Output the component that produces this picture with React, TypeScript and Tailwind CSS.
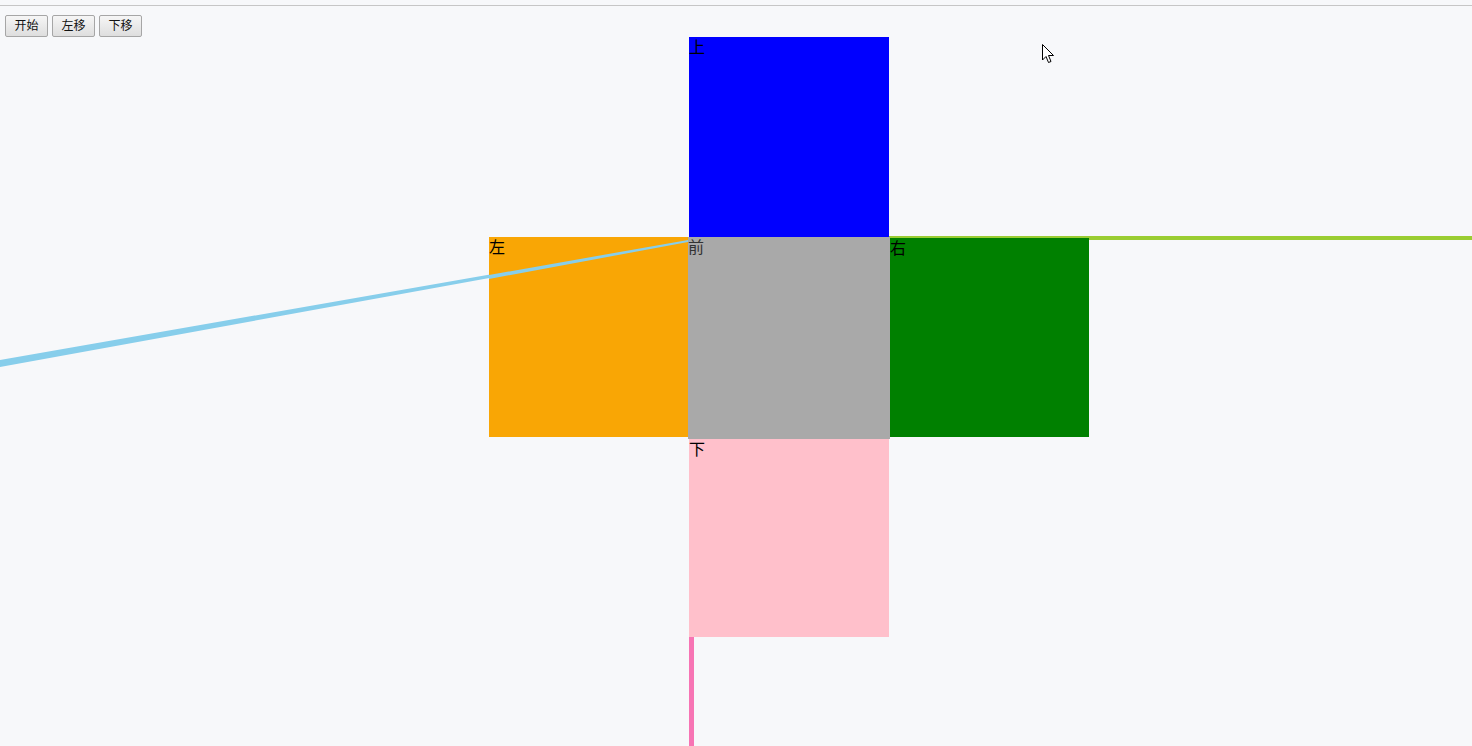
import React from "react";

const faces = [
  { label: "上", cls: "left-[689px] top-[37px] w-[200px] h-[200px] bg-[#0000ff]", text: "text-black" },
  { label: "左", cls: "left-[489px] top-[237px] w-[200px] h-[200px] bg-[#f9a605]", text: "text-black" },
  { label: "右", cls: "left-[890px] top-[237px] w-[199px] h-[200px] bg-[#008000] border-t border-[#9acd32]", text: "text-black" },
  { label: "下", cls: "left-[689px] top-[439px] w-[200px] h-[198px] bg-[#ffc0cb]", text: "text-black" },
  { label: "前", cls: "left-[688px] top-[237px] w-[202px] h-[202px] bg-[#a9a9a9]", text: "text-[#333333]" },
];

const buttons = ["开始", "左移", "下移"];

export default function App() {
  return (
    <div
      className="relative w-[1472px] h-[746px] overflow-hidden bg-[#f7f8fa]"
      style={{ fontFamily: '"Liberation Sans", "Noto Sans CJK SC", sans-serif' }}
    >
      <div className="h-[5px]" />
      <div className="h-px bg-[#c6c6c6]" />

      {/* controls */}
      <div className="flex gap-[4px] pl-[5px] pt-[9px]">
        {buttons.map((b) => (
          <button
            key={b}
            className="w-[43px] h-[22px] text-[12px] leading-none text-[#111111] rounded-[2px] border border-[#a6a6a6] bg-gradient-to-b from-[#f6f6f6] to-[#dedede]"
          >
            {b}
          </button>
        ))}
      </div>

      {/* axis lines */}
      <svg className="absolute left-0 top-0" width="1472" height="746">
        <rect x="889" y="236" width="583" height="4" fill="#9acd32" />
        <polygon points="688,240 688,242 0,367 0,360" fill="#87ceeb" />
        <rect x="689" y="637" width="5" height="109" fill="#f774b4" />
      </svg>

      {/* cube net */}
      {faces.map((f) => (
        <div key={f.label} className={`absolute ${f.cls}`}>
          <span className={`block text-[16px] leading-[22px] ${f.text}`}>{f.label}</span>
        </div>
      ))}

      {/* skyblue line passes over the left face */}
      <svg className="absolute left-0 top-0 pointer-events-none" width="1472" height="746">
        <polygon points="688,240 688,242 489,279 489,275" fill="#87ceeb" />
      </svg>

      {/* mouse pointer */}
      <svg className="absolute left-[1042px] top-[44px]" width="14" height="22" viewBox="0 0 14 22">
        <path d="M0.5 0.5 L0.5 16 L4 12.5 L6.5 18.5 L9 17.5 L6.5 11.5 L11.5 11.5 Z" fill="#ffffff" stroke="#000000" strokeWidth="1" />
      </svg>
    </div>
  );
}
